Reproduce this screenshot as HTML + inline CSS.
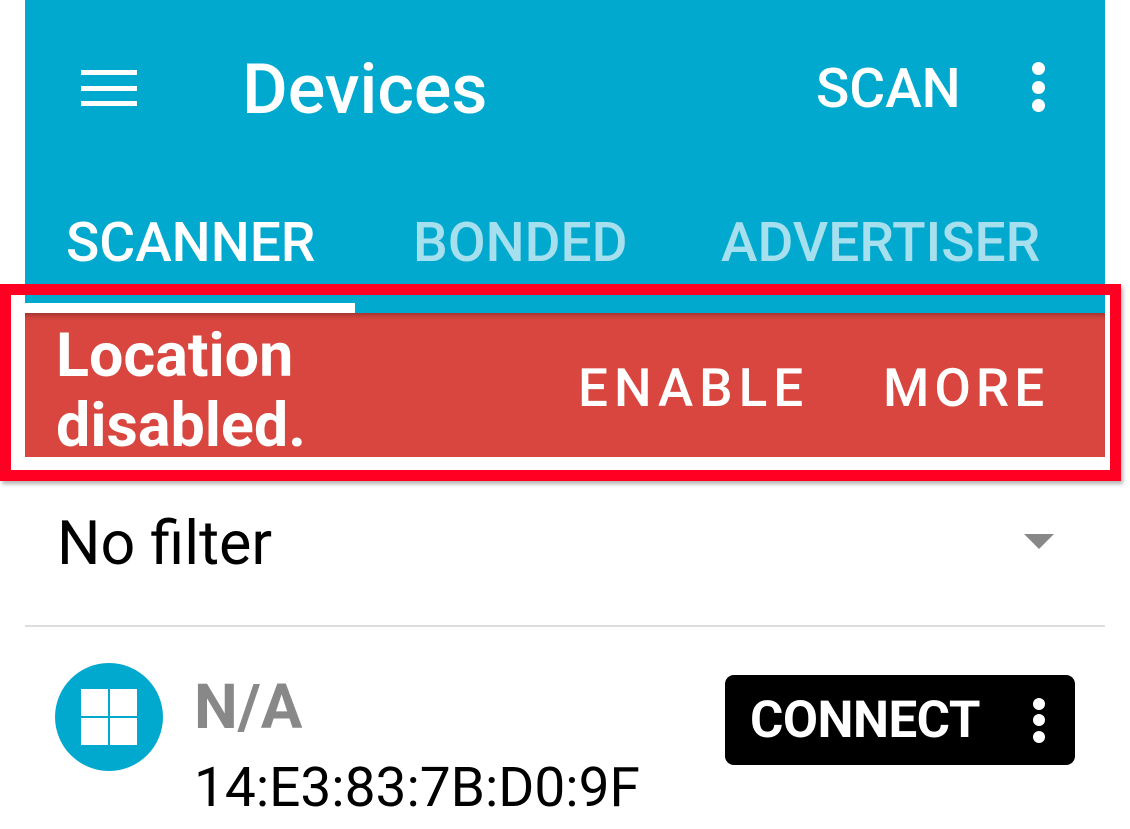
<!DOCTYPE html>
<html><head><style>
*{margin:0;padding:0;box-sizing:border-box}
body{width:1130px;height:829px;background:#fff;position:relative;overflow:hidden;font-family:"Roboto","Liberation Sans",sans-serif}
.a{position:absolute;white-space:nowrap}
</style></head><body>
<div class="a" style="left:25px;top:0;width:1080px;height:313px;background:#02A9CF"></div>
<div class="a" style="left:81px;top:70px;width:56px;height:5px;background:#fff"></div>
<div class="a" style="left:81px;top:86px;width:56px;height:5px;background:#fff"></div>
<div class="a" style="left:81px;top:101px;width:56px;height:5px;background:#fff"></div>
<div class="a" style="left:242px;top:50px;font-size:70px;font-weight:500;color:#fff;line-height:80px">Devices</div>
<div class="a" style="left:816px;top:57px;font-size:55px;font-weight:500;color:#fff;line-height:64px">SCAN</div>
<div class="a" style="left:1032px;top:62px;width:13px;height:13px;border-radius:50%;background:#fff"></div>
<div class="a" style="left:1032px;top:81px;width:13px;height:13px;border-radius:50%;background:#fff"></div>
<div class="a" style="left:1032px;top:99px;width:13px;height:13px;border-radius:50%;background:#fff"></div>
<div class="a" style="left:66px;top:211px;font-size:55px;font-weight:500;color:#fff;line-height:64px">SCANNER</div>
<div class="a" style="left:413px;top:211px;font-size:55px;font-weight:500;color:#A6E0EE;line-height:64px">BONDED</div>
<div class="a" style="left:721px;top:211px;font-size:55px;font-weight:500;color:#A6E0EE;line-height:64px">ADVERTISER</div>
<div class="a" style="left:25px;top:303px;width:330px;height:10px;background:#fff"></div>
<div class="a" style="left:25px;top:313px;width:1080px;height:144px;background:#D8463F;box-shadow:inset 0 6px 6px -4px rgba(0,0,0,.3)"></div>
<div class="a" style="left:56px;top:320px;font-size:61px;font-weight:bold;color:#fff;line-height:70px">Location<br>disabled.</div>
<div class="a" style="left:578px;top:356px;font-size:53px;font-weight:500;color:#fff;letter-spacing:6px;line-height:64px">ENABLE</div>
<div class="a" style="left:883px;top:356px;font-size:53px;font-weight:500;color:#fff;letter-spacing:5px;line-height:64px">MORE</div>
<div class="a" style="left:0;top:284px;width:1121px;height:197px;border:11px solid #FF0022;box-shadow:2px 3px 4px rgba(0,0,0,.3)"></div>
<div class="a" style="left:57px;top:510px;font-size:61px;color:#000;line-height:66px">No filter</div>
<div class="a" style="left:1024px;top:534px;width:0;height:0;border-left:15px solid transparent;border-right:15px solid transparent;border-top:15px solid #888"></div>
<div class="a" style="left:25px;top:625px;width:1080px;height:2px;background:#ddd"></div>
<div class="a" style="left:55px;top:663px;width:108px;height:108px;border-radius:50%;background:#02A9CF"></div>
<div class="a" style="left:81px;top:689px;width:27px;height:27px;background:#fff"></div>
<div class="a" style="left:110px;top:689px;width:27px;height:27px;background:#fff"></div>
<div class="a" style="left:81px;top:718px;width:27px;height:27px;background:#fff"></div>
<div class="a" style="left:110px;top:718px;width:27px;height:27px;background:#fff"></div>
<div class="a" style="left:194px;top:674px;font-size:62px;font-weight:bold;color:#888;line-height:68px">N/A</div>
<div class="a" style="left:194px;top:756px;font-size:55px;color:#000;line-height:64px">14:E3:83:7B:D0:9F</div>
<div class="a" style="left:725px;top:675px;width:350px;height:90px;border-radius:9px;background:#000"></div>
<div class="a" style="left:750px;top:693px;font-size:51px;font-weight:bold;color:#fff;line-height:56px;letter-spacing:-0.5px">CONNECT</div>
<div class="a" style="left:1033px;top:698px;width:12px;height:12px;border-radius:50%;background:#fff"></div>
<div class="a" style="left:1033px;top:714px;width:12px;height:12px;border-radius:50%;background:#fff"></div>
<div class="a" style="left:1033px;top:731px;width:12px;height:12px;border-radius:50%;background:#fff"></div>
</body></html>
